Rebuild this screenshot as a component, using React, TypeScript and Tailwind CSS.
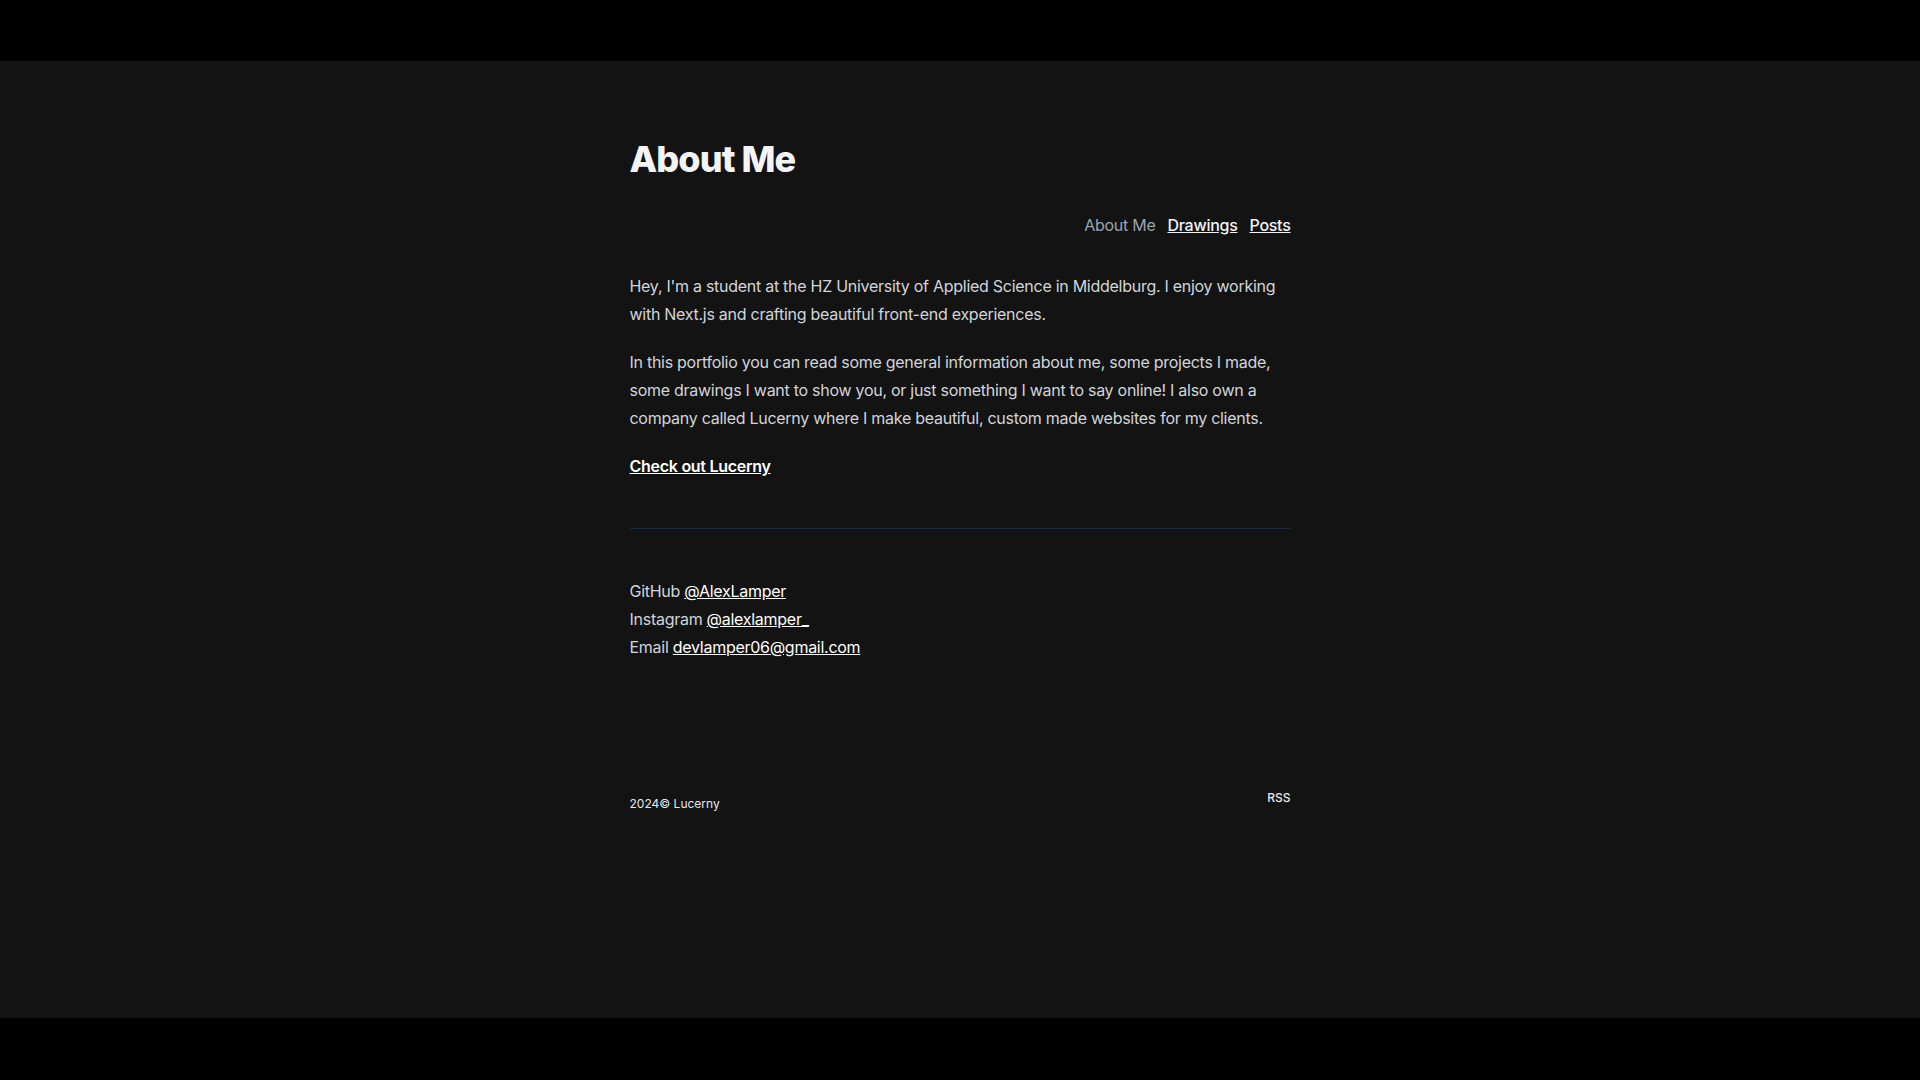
import React from "react";

export default function App() {
  return (
    <div className="min-h-screen bg-black" style={{ fontFamily: "Inter, 'Noto Sans', sans-serif" }}>
      <div className="h-[61px] bg-black" />
      <div className="h-[957px] bg-[#131313]">
        <div className="mx-auto w-[661px] pt-[78px]">
          <h1 className="text-4xl leading-10 font-extrabold tracking-tight text-[#f3f4f6]">About Me</h1>
          <nav className="mt-[34px] flex justify-end gap-3 text-base leading-6 tracking-[-0.017em]">
            <span className="text-[#9ca3af]">About Me</span>
            <a href="#" className="font-medium text-[#f3f4f6] underline">Drawings</a>
            <a href="#" className="font-medium text-[#f3f4f6] underline">Posts</a>
          </nav>
          <div className="mt-[35px] text-base leading-7 tracking-[-0.017em] text-[#d1d5db]">
            <p>
              Hey, I'm a student at the HZ University of Applied Science in Middelburg. I enjoy working with Next.js and
              crafting beautiful front-end experiences.
            </p>
            <p className="mt-5">
              In this portfolio you can read some general information about me, some projects I made, some drawings I want
              to show you, or just something I want to say online! I also own a company called Lucerny where I make
              beautiful, custom made websites for my clients.
            </p>
            <p className="mt-5">
              <a href="#" className="font-semibold text-white underline">Check out Lucerny</a>
            </p>
            <hr className="my-12 border-t border-[#1e293b]" />
            <div>
              GitHub <a href="#" className="text-white underline">@AlexLamper</a>
            </div>
            <div>
              Instagram <a href="#" className="text-white underline">@alexlamper_</a>
            </div>
            <div>
              Email <a href="#" className="text-white underline">devlamper06@gmail.com</a>
            </div>
          </div>
          <footer className="mt-[127px] flex items-start justify-between text-xs leading-5 text-[#e5e7eb]">
            <span className="mt-[6px]">2024© Lucerny</span>
            <a href="#" className="font-medium text-[#e5e7eb]">RSS</a>
          </footer>
        </div>
      </div>
      <div className="h-[62px] bg-black" />
    </div>
  );
}
